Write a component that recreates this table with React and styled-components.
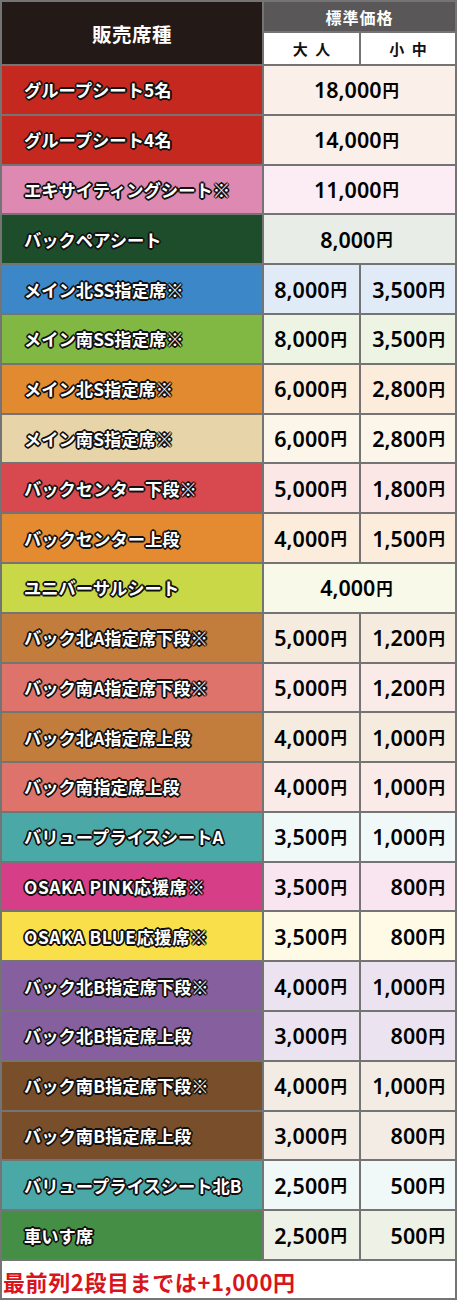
import React from 'react';
import styled, { createGlobalStyle } from 'styled-components';

const rows = [
  ['グループシート5名', '#c4281f', '#fbefe9', ['18,000']],
  ['グループシート4名', '#c4281f', '#fbefe9', ['14,000']],
  ['エキサイティングシート※', '#dd89b1', '#fbedf3', ['11,000']],
  ['バックペアシート', '#1e4d2b', '#e8eee7', ['8,000']],
  ['メイン北SS指定席※', '#3b87c8', '#e1eaf7', ['8,000', '3,500']],
  ['メイン南SS指定席※', '#80b843', '#eef4e3', ['8,000', '3,500']],
  ['メイン北S指定席※', '#e18a30', '#fcecdc', ['6,000', '2,800']],
  ['メイン南S指定席※', '#e8d4a9', '#fbf5ea', ['6,000', '2,800']],
  ['バックセンター下段※', '#d8484f', '#fbe8e6', ['5,000', '1,800']],
  ['バックセンター上段', '#e48a30', '#fcecdc', ['4,000', '1,500']],
  ['ユニバーサルシート', '#c9d846', '#f8f9e8', ['4,000']],
  ['バック北A指定席下段※', '#c27c3b', '#f5ebdf', ['5,000', '1,200']],
  ['バック南A指定席下段※', '#dd736b', '#fbebe8', ['5,000', '1,200']],
  ['バック北A指定席上段', '#c27c3b', '#f5ebdf', ['4,000', '1,000']],
  ['バック南指定席上段', '#dd736b', '#fbebe8', ['4,000', '1,000']],
  ['バリュープライスシートA', '#4aa9a6', '#f1f8f8', ['3,500', '1,000']],
  ['OSAKA PINK応援席※', '#d63f87', '#f9e5f0', ['3,500', '800']],
  ['OSAKA BLUE応援席※', '#f9df4a', '#fefae6', ['3,500', '800']],
  ['バック北B指定席下段※', '#865f9e', '#ebe4f0', ['4,000', '1,000']],
  ['バック北B指定席上段', '#865f9e', '#ebe4f0', ['3,000', '800']],
  ['バック南B指定席下段※', '#784e2b', '#f3ece4', ['4,000', '1,000']],
  ['バック南B指定席上段', '#784e2b', '#f3ece4', ['3,000', '800']],
  ['バリュープライスシート北B', '#4aa9a6', '#f1f8f8', ['2,500', '500']],
  ['車いす席', '#458e45', '#eef1e6', ['2,500', '500']],
];

const GlobalStyle = createGlobalStyle`
  body {
    margin: 0;
    background: #fff;
    font-family: "Noto Sans CJK JP", "Noto Sans", sans-serif;
  }
`;

const Frame = styled.div`
  box-sizing: border-box;
  width: 457px;
  height: 1300px;
  border: 2px solid #747474;
  display: flex;
  flex-direction: column;
`;

const Table = styled.div`
  display: grid;
  grid-template-columns: 260px 95px 94px;
  grid-template-rows: 29px 31px repeat(24, 1fr);
  gap: 2px;
  height: 1257px;
  background: #747474;
  border-bottom: 2px solid #747474;
`;

const HeadSeat = styled.div`
  grid-row: span 2;
  background: #231916;
  color: #fff;
  font-weight: 700;
  font-size: 19.5px;
  letter-spacing: 0.5px;
  display: flex;
  align-items: center;
  justify-content: center;
`;

const HeadPrice = styled.div`
  grid-column: span 2;
  background: #595757;
  color: #fff;
  font-weight: 700;
  font-size: 16px;
  display: flex;
  align-items: center;
  justify-content: center;
  letter-spacing: 1px;
`;

const HeadAge = styled.div`
  background: #fff;
  color: #111;
  font-weight: 700;
  font-size: 15px;
  display: flex;
  align-items: center;
  justify-content: center;
  word-spacing: 4px;
`;

const Label = styled.div`
  background: ${(p) => p.$color};
  color: #fff;
  font-weight: 700;
  font-size: 17.3px;
  display: flex;
  align-items: center;
  padding-left: 22px;
  white-space: nowrap;
  letter-spacing: ${(p) => (p.$latin ? '0.6px' : '0')};
  text-shadow:
    1.8px 0 0 #111, -1.8px 0 0 #111, 0 1.8px 0 #111, 0 -1.8px 0 #111,
    1.3px 1.3px 0 #111, -1.3px 1.3px 0 #111, 1.3px -1.3px 0 #111, -1.3px -1.3px 0 #111;
`;

const Price = styled.div`
  background: ${(p) => p.$tint};
  color: #000;
  display: flex;
  align-items: center;
  justify-content: ${(p) => (p.$wide ? 'center' : 'flex-end')};
  grid-column: ${(p) => (p.$wide ? 'span 2' : 'auto')};
  padding-right: ${(p) => (p.$wide ? '6px' : p.$last ? '10px' : '12px')};
  white-space: nowrap;
`;

const Amount = styled.span`
  font-family: "Noto Sans", "Open Sans", sans-serif;
  font-weight: 600;
  font-size: 21.5px;
`;

const Yen = styled.span`
  font-family: "Noto Sans CJK JP", sans-serif;
  font-weight: 700;
  font-size: 16.5px;
  margin-left: 1px;
`;

const Note = styled.div`
  flex: 1;
  display: flex;
  align-items: center;
  padding-left: 1px;
  padding-top: 2px;
  color: #d8141c;
  font-weight: 700;
  font-size: 22px;
  letter-spacing: 0.6px;
  white-space: nowrap;
`;

const Yens = ({ value }) => (
  <>
    <Amount>{value}</Amount>
    <Yen>円</Yen>
  </>
);

export default function App() {
  return (
    <Frame>
      <GlobalStyle />
      <Table>
        <HeadSeat>販売席種</HeadSeat>
        <HeadPrice>標準価格</HeadPrice>
        <HeadAge>大 人</HeadAge>
        <HeadAge>小 中</HeadAge>
        {rows.map(([name, color, tint, prices]) => (
          <React.Fragment key={name}>
            <Label $color={color} $latin={name.startsWith('OSAKA')}>
              {name}
            </Label>
            {prices.length === 1 ? (
              <Price $tint={tint} $wide>
                <Yens value={prices[0]} />
              </Price>
            ) : (
              prices.map((v, i) => (
                <Price key={i} $tint={tint} $last={i === 1}>
                  <Yens value={v} />
                </Price>
              ))
            )}
          </React.Fragment>
        ))}
      </Table>
      <Note>最前列2段目までは+1,000円</Note>
    </Frame>
  );
}
